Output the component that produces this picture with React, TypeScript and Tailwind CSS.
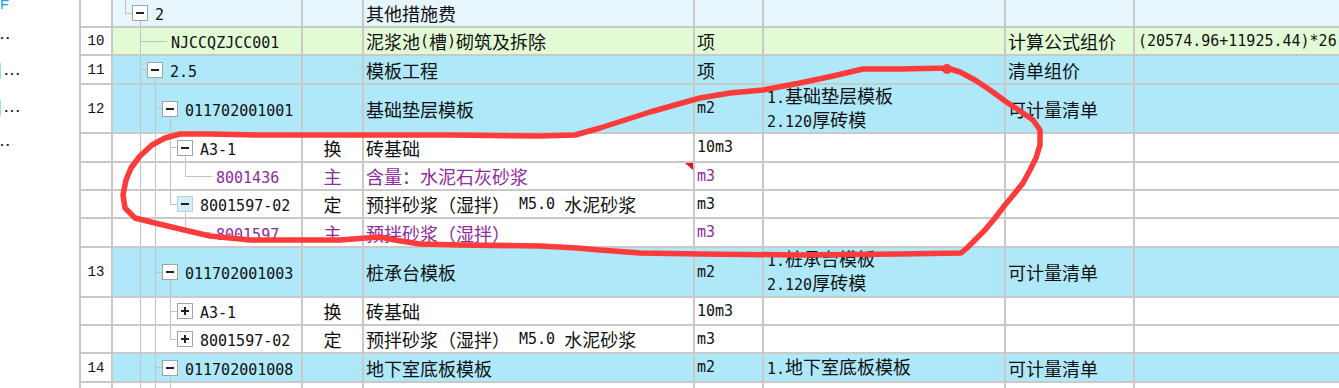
import React from 'react'

type Tree = {
  guides: number[]
  parent?: number
  last?: boolean
  box?: 'minus' | 'plus' | 'sel'
  text?: string
  purple?: boolean
}

type RowData = {
  h: number
  num?: string
  bg: 'a' | 'g' | 'b' | 'w'
  tree: Tree
  cat?: string
  name?: string
  unit?: string
  purple?: boolean
  mark?: boolean
  feat?: string[]
  type?: string
  formula?: string
}

// tree guide x positions, relative to the tree cell
const G0 = 12
const G1 = 27
const G2 = 42
const G3 = 57
const G4 = 72

const LINE = 'bg-[#c2c2c2]'

const rows: RowData[] = [
  { h: 28, bg: 'a', tree: { guides: [], parent: G0, last: true, box: 'minus', text: '2' }, name: '其他措施费' },
  {
    h: 28, num: '10', bg: 'g', tree: { guides: [], parent: G1, text: 'NJCCQZJCC001' },
    name: '泥浆池(槽)砌筑及拆除', unit: '项', type: '计算公式组价', formula: '(20574.96+11925.44)*26.5%',
  },
  { h: 29, num: '11', bg: 'b', tree: { guides: [], parent: G1, box: 'minus', text: '2.5' }, name: '模板工程', unit: '项', type: '清单组价' },
  {
    h: 49, num: '12', bg: 'b', tree: { guides: [G1], parent: G2, box: 'minus', text: '011702001001' },
    name: '基础垫层模板', unit: 'm2', feat: ['1.基础垫层模板', '2.120厚砖模'], type: '可计量清单',
  },
  { h: 29, bg: 'w', tree: { guides: [G1, G2], parent: G3, box: 'minus', text: 'A3-1' }, cat: '换', name: '砖基础', unit: '10m3' },
  {
    h: 28, bg: 'w', tree: { guides: [G1, G2, G3], parent: G4, last: true, text: '8001436', purple: true },
    cat: '主', name: '含量：水泥石灰砂浆', unit: 'm3', purple: true, mark: true,
  },
  { h: 28, bg: 'w', tree: { guides: [G1, G2], parent: G3, last: true, box: 'sel', text: '8001597-02' }, cat: '定', name: '预拌砂浆（湿拌） M5.0 水泥砂浆', unit: 'm3' },
  {
    h: 29, bg: 'w', tree: { guides: [G1, G2], parent: G4, last: true, text: '8001597…', purple: true },
    cat: '主', name: '预拌砂浆（湿拌）', unit: 'm3', purple: true,
  },
  {
    h: 50, num: '13', bg: 'b', tree: { guides: [G1], parent: G2, box: 'minus', text: '011702001003' },
    name: '桩承台模板', unit: 'm2', feat: ['1.桩承台模板', '2.120厚砖模'], type: '可计量清单',
  },
  { h: 28, bg: 'w', tree: { guides: [G1, G2], parent: G3, box: 'plus', text: 'A3-1' }, cat: '换', name: '砖基础', unit: '10m3' },
  { h: 28, bg: 'w', tree: { guides: [G1, G2], parent: G3, last: true, box: 'plus', text: '8001597-02' }, cat: '定', name: '预拌砂浆（湿拌） M5.0 水泥砂浆', unit: 'm3' },
  {
    h: 29, num: '14', bg: 'b', tree: { guides: [G1], parent: G2, box: 'minus', text: '011702001008' },
    name: '地下室底板模板', unit: 'm2', feat: ['1.地下室底板模板'], type: '可计量清单',
  },
  { h: 12, bg: 'w', tree: { guides: [G1, G2, G3] } },
]

const bgs = {
  a: 'bg-[#e6f6fc]',
  g: 'bg-[#e3fbd5]',
  b: 'bg-[#aee8f9]',
  w: 'bg-white',
}

// ascii runs get the half width mono face, the rest stays CJK
function Txt({ s }: { s: string }) {
  const parts = s.split(/([\x20-\x7e]+|…)/).filter(Boolean)
  return (
    <>
      {parts.map((p, i) => {
        if (p === '…') return <span key={i} className="font-['Liberation_Sans',sans-serif]">…</span>
        if (/^[\x20-\x7e]+$/.test(p))
          return <span key={i} className="font-['DejaVu_Sans_Mono',monospace] text-[15px] whitespace-pre">{p}</span>
        return <span key={i}>{p}</span>
      })}
    </>
  )
}

function Box({ kind }: { kind: 'minus' | 'plus' | 'sel' }) {
  const sel = kind === 'sel'
  return (
    <div
      className={`relative w-[16px] h-[16px] shrink-0 border flex items-center justify-center ${
        sel ? 'bg-[#d7edf6] border-[#b3d3e0]' : 'bg-white border-[#a3a3a3]'
      }`}
    >
      <div className="w-[8px] h-[2px] bg-[#222]" />
      {kind === 'plus' && <div className="absolute w-[2px] h-[8px] bg-[#222]" />}
    </div>
  )
}

function TreeCell({ t, h, bg }: { t: Tree; h: number; bg: string }) {
  const ch = h - 2
  const mid = Math.floor(ch / 2)
  const p = t.parent
  return (
    <div className={`relative w-[190px] shrink-0 border-r-2 border-[#c9c9c9] overflow-hidden ${bg}`}>
      {t.guides.map((x) => (
        <div key={x} className={`absolute top-0 bottom-0 w-px ${LINE}`} style={{ left: x }} />
      ))}
      {p !== undefined && (
        <>
          <div className={`absolute top-0 w-px ${LINE}`} style={{ left: p, height: t.last ? mid : ch }} />
          <div className={`absolute h-px ${LINE}`} style={{ left: p, top: mid, width: t.box ? 7 : 27 }} />
          {t.box && t.box !== 'plus' && (
            <div className={`absolute bottom-0 w-px ${LINE}`} style={{ left: p + 15, top: mid + 8 }} />
          )}
          <div className="relative flex h-full items-center" style={{ paddingLeft: t.box ? p + 7 : p + 31 }}>
            {t.box && <Box kind={t.box} />}
            <div className={`whitespace-nowrap ${t.box ? 'ml-[7px]' : ''} ${t.purple ? 'text-[#8f2a9f]' : 'text-[#111]'}`}>
              <Txt s={t.text ?? ''} />
            </div>
          </div>
        </>
      )}
    </div>
  )
}

function Row({ r }: { r: RowData }) {
  const bg = bgs[r.bg]
  const color = r.purple ? 'text-[#8f2a9f]' : 'text-[#111]'
  const last = !r.num && !r.tree.parent
  return (
    <div className={`flex shrink-0 ${last ? 'flex-1' : 'border-b-2 border-[#c9c9c9]'}`} style={last ? undefined : { height: r.h }}>
      <div className="w-[32px] shrink-0 border-r-2 border-[#c9c9c9] bg-white flex items-center justify-center font-['Liberation_Mono',monospace] text-[14px] text-[#111]">
        {r.num}
      </div>
      <TreeCell t={r.tree} h={r.h} bg={bg} />
      <div className={`w-[61px] shrink-0 border-r-2 border-[#c9c9c9] flex items-center justify-center ${bg} ${color}`}>
        {r.cat}
      </div>
      <div className={`relative w-[331px] shrink-0 border-r-2 border-[#c9c9c9] flex items-center pl-[2px] whitespace-nowrap overflow-hidden ${bg} ${color}`}>
        {r.name && <Txt s={r.name} />}
        {r.mark && (
          <div className="absolute right-0 top-0 w-0 h-0 border-l-[8px] border-l-transparent border-t-[7px] border-t-[#e41515]" />
        )}
      </div>
      <div className={`w-[69px] shrink-0 border-r-2 border-[#c9c9c9] flex items-center pl-[2px] ${bg} ${color}`}>
        {r.unit && <Txt s={r.unit} />}
      </div>
      <div className={`w-[242px] shrink-0 border-r-2 border-[#c9c9c9] flex flex-col justify-center pl-[3px] leading-[21px] whitespace-nowrap text-[#111] ${bg}`}>
        {r.feat?.map((f) => (
          <div key={f}>
            <Txt s={f} />
          </div>
        ))}
      </div>
      <div className={`w-[129px] shrink-0 border-r-2 border-[#c9c9c9] flex items-center pl-[2px] text-[#111] ${bg}`}>
        {r.type}
      </div>
      <div className={`flex-1 flex items-center pl-[3px] whitespace-nowrap overflow-hidden text-[#111] ${bg}`}>
        {r.formula && <Txt s={r.formula} />}
      </div>
    </div>
  )
}

// hand drawn annotation on top of the grid
const scribble = [
  [947, 68], [960, 72], [975, 80], [990, 90], [1005, 101], [1020, 111], [1033, 120], [1040, 130], [1040, 145],
  [1036, 158], [1030, 170], [1023, 183], [1015, 193], [1005, 205], [995, 218], [985, 230], [975, 240], [967, 248],
  [961, 253], [900, 254], [800, 255], [700, 254], [640, 253], [600, 250], [577, 248], [540, 246], [460, 245],
  [420, 244], [395, 240], [380, 237], [340, 240], [300, 240], [250, 240], [210, 236], [180, 229], [155, 223],
  [135, 218], [125, 208], [123, 195], [126, 180], [131, 168], [140, 156], [152, 145], [165, 138], [180, 134],
  [210, 134], [260, 135], [350, 135], [450, 135], [540, 136], [575, 135], [600, 128], [625, 120], [650, 112],
  [675, 105], [700, 98], [730, 93], [763, 90], [800, 83], [833, 76], [863, 69], [900, 69], [947, 68],
]

export default function App() {
  return (
    <div className="relative flex w-[1339px] h-[388px] overflow-hidden bg-white font-['Noto_Sans_CJK_SC',sans-serif] text-[18px] leading-none">
      {/* left nav pane, scrolled */}
      <div className="w-[81px] shrink-0 border-r-2 border-[#c6c6c6] overflow-hidden text-[#111]">
        <div className="h-[9px] overflow-hidden flex items-end">
          <span className="-mb-[3px] text-[14px] text-[#1ba6e0] font-['Liberation_Sans',sans-serif]">E</span>
        </div>
        <div className="mt-[15px] h-[18px] flex items-center -ml-[7px] font-['Liberation_Sans',sans-serif]">…</div>
        <div className="mt-[18px] h-[18px] flex items-center -ml-[15px]">
          目<span className="font-['Liberation_Sans',sans-serif]">…</span>
        </div>
        <div className="mt-[19px] h-[18px] flex items-center -ml-[15px]">
          目<span className="font-['Liberation_Sans',sans-serif]">…</span>
        </div>
        <div className="mt-[16px] h-[18px] flex items-center -ml-[7px] font-['Liberation_Sans',sans-serif]">…</div>
      </div>

      <div className="flex-1 flex flex-col">
        {rows.map((r, i) => (
          <Row key={i} r={r} />
        ))}
      </div>

      <svg className="absolute inset-0 pointer-events-none" width="1339" height="388" viewBox="0 0 1339 388">
        <polyline
          points={scribble.map((p) => p.join(',')).join(' ')}
          fill="none"
          stroke="#fd3b3b"
          strokeWidth="5.5"
          strokeLinejoin="round"
          strokeLinecap="round"
        />
        <circle cx="947" cy="69" r="5" fill="#fd3b3b" />
      </svg>
    </div>
  )
}
